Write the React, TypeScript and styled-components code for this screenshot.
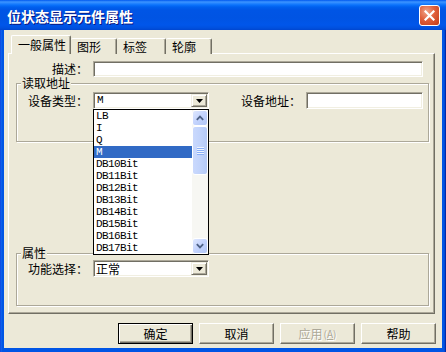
import React from 'react'
import styled, { createGlobalStyle } from 'styled-components'

const GlobalStyle = createGlobalStyle`
	html, body {
		margin: 0;
		padding: 0;
		background: #fff;
	}
	body {
		font-family: "Noto Sans CJK SC", "Noto Sans", sans-serif;
		font-size: 12px;
		color: #000;
	}
`

const face = '#ECE9D8'
const mono = '"Liberation Mono", "DejaVu Sans Mono", monospace'

const items = ['LB', 'I', 'Q', 'M', 'DB10Bit', 'DB11Bit', 'DB12Bit', 'DB13Bit', 'DB14Bit', 'DB15Bit', 'DB16Bit', 'DB17Bit']

const tabs = [
	{ label: '一般属性', width: 60 },
	{ label: '图形', width: 46 },
	{ label: '标签', width: 49 },
	{ label: '轮廓', width: 46 },
]

export default function App() {
	return (
		<>
			<GlobalStyle />
			<Window>
				<TitleBar>
					<Title>位状态显示元件属性</Title>
					<CloseButton>
						<svg width="11" height="11" viewBox="0 0 11 11">
							<path d="M1.5 1.5 L9.5 9.5 M9.5 1.5 L1.5 9.5" stroke="#fff" strokeWidth="2.2" strokeLinecap="square" />
						</svg>
					</CloseButton>
				</TitleBar>
				<Frame>
					<Client>
						<TabRow>
							{tabs.map((t, i) => (
								<Tab key={t.label} $active={i === 0} $width={t.width}>
									{t.label}
								</Tab>
							))}
						</TabRow>
						<Panel>
							<Row>
								<Label $width={72}>描述：</Label>
								<TextBox $width={330} />
							</Row>

							<Group>
								<Legend>读取地址</Legend>
								<GroupBody $top={3} $bottom={32}>
									<Row>
										<Label $width={71}>设备类型：</Label>
										<Combo $width={116}>
											<ComboValue>M</ComboValue>
											<DropButton>
												<svg width="7" height="4" viewBox="0 0 7 4">
													<polygon points="0,0 7,0 3.5,4" fill="#000" />
												</svg>
											</DropButton>
											<DropList>
												<ListItems>
													{items.map((item) => (
														<ListItem key={item} $selected={item === 'M'}>
															{item}
														</ListItem>
													))}
												</ListItems>
												<ScrollBar>
													<ScrollButton>
														<svg width="8" height="6" viewBox="0 0 8 6">
															<path d="M0.8 4.8 L4 1.6 L7.2 4.8" stroke="#4D6185" strokeWidth="1.8" fill="none" />
														</svg>
													</ScrollButton>
													<Thumb>
														<Grip />
													</Thumb>
													<Track />
													<ScrollButton>
														<svg width="8" height="6" viewBox="0 0 8 6">
															<path d="M0.8 1.2 L4 4.4 L7.2 1.2" stroke="#4D6185" strokeWidth="1.8" fill="none" />
														</svg>
													</ScrollButton>
												</ScrollBar>
											</DropList>
										</Combo>
										<Label $width={60} $gap={32}>设备地址：</Label>
										<TextBox $width={117} $height={17} />
									</Row>
								</GroupBody>
							</Group>

							<Group $push>
								<Legend>属性</Legend>
								<GroupBody $top={1} $bottom={28}>
									<Row>
										<Label $width={71}>功能选择：</Label>
										<Combo $width={116}>
											<ComboValue $cjk>正常</ComboValue>
											<DropButton>
												<svg width="7" height="4" viewBox="0 0 7 4">
													<polygon points="0,0 7,0 3.5,4" fill="#000" />
												</svg>
											</DropButton>
										</Combo>
									</Row>
								</GroupBody>
							</Group>
						</Panel>

						<ButtonRow>
							<Button $default>确定</Button>
							<Button>取消</Button>
							<Button $disabled>
								应用<Small>(<u>A</u>)</Small>
							</Button>
							<Button>帮助</Button>
						</ButtonRow>
					</Client>
				</Frame>
			</Window>
		</>
	)
}

const Window = styled.div`
	width: 446px;
	height: 352px;
	display: flex;
	flex-direction: column;
	background: #0055e5;
`

const TitleBar = styled.div`
	height: 30px;
	flex-shrink: 0;
	display: flex;
	align-items: center;
	justify-content: space-between;
	padding: 0 6px 0 7px;
	box-sizing: border-box;
	background: linear-gradient(
		#0058ee 0px,
		#3d95ff 2px,
		#2a88ff 3px,
		#0a72fb 5px,
		#0060ee 7px,
		#0055e5 10px,
		#0054e3 18px,
		#0056ea 25px,
		#0050de 28px,
		#0046cf 30px
	);
`

const Title = styled.div`
	color: #fff;
	font-weight: bold;
	font-size: 14px;
	line-height: 16px;
	text-shadow: 1px 1px 0 #0a1883;
	margin-top: 1px;
`

const CloseButton = styled.div`
	width: 21px;
	height: 21px;
	box-sizing: border-box;
	border: 1px solid #fff;
	border-radius: 3px;
	display: flex;
	align-items: center;
	justify-content: center;
	background: radial-gradient(circle at 35% 30%, #f0a58a 0%, #e0603c 45%, #c23a16 100%);
`

const Frame = styled.div`
	flex: 1;
	display: flex;
	padding: 0 4px 4px;
	background: linear-gradient(90deg, #0831d9 0, #166aee 1px, #0055e5 2px, #0055e5 calc(100% - 2px), #0041c8 calc(100% - 1px), #00138c 100%);
`

const Client = styled.div`
	flex: 1;
	display: flex;
	flex-direction: column;
	background: ${face};
	padding: 5px 6px 4px 4px;
`

const TabRow = styled.div`
	height: 19px;
	display: flex;
	align-items: flex-end;
	padding-left: 3px;
	position: relative;
	z-index: 1;
`

const Tab = styled.div<{ $active?: boolean; $width: number }>`
	width: ${(p) => p.$width}px;
	height: ${(p) => (p.$active ? 19 : 16)}px;
	box-sizing: border-box;
	padding: ${(p) => (p.$active ? 2 : 1)}px 0 0 6px;
	line-height: 13px;
	background: ${face};
	border-top: 1px solid #fff;
	border-left: ${(p) => (p.$active ? '1px solid #fff' : 'none')};
	border-right: 1px solid #716f64;
	box-shadow: inset -1px 0 0 #aca899;
	border-radius: 2px 2px 0 0;
	white-space: nowrap;
`

const Panel = styled.div`
	height: 261px;
	box-sizing: border-box;
	margin: -1px 1px 0 0;
	border: 1px solid;
	border-color: #fff #716f64 #716f64 #fff;
	box-shadow: inset -1px -1px 0 #aca899;
	padding: 7px 5px 7px 7px;
	display: flex;
	flex-direction: column;
`

const Row = styled.div`
	display: flex;
	align-items: center;
`

const Label = styled.div<{ $width: number; $gap?: number }>`
	width: ${(p) => p.$width}px;
	margin-left: ${(p) => p.$gap ?? 0}px;
	margin-right: 5px;
	flex-shrink: 0;
	text-align: right;
	white-space: nowrap;
	line-height: 14px;
`

const sunken = `
	box-sizing: border-box;
	background: #fff;
	border: 1px solid;
	border-color: #aca899 #fff #fff #aca899;
	box-shadow: inset 1px 1px 0 #716f64, inset -1px -1px 0 #f1efe2;
`

const TextBox = styled.div<{ $width: number; $height?: number }>`
	${sunken}
	width: ${(p) => p.$width}px;
	height: ${(p) => p.$height ?? 16}px;
`

const Group = styled.fieldset<{ $push?: boolean }>`
	margin: ${(p) => (p.$push ? 'auto' : '0')} 0 0;
	padding: 0;
	min-width: 0;
	border: 1px solid #aca899;
	box-shadow: inset 1px 1px 0 #fff, 1px 1px 0 #fff;
`

const Legend = styled.legend`
	font-size: 12px;
	line-height: 12px;
	padding: 0 1px;
	margin-left: 4px;
	background: ${face};
`

const GroupBody = styled.div<{ $top: number; $bottom: number }>`
	padding: ${(p) => p.$top}px 0 ${(p) => p.$bottom}px 0;
`

const Combo = styled.div<{ $width: number }>`
	${sunken}
	position: relative;
	width: ${(p) => p.$width}px;
	height: 17px;
	display: flex;
	align-items: center;
	padding: 1px;
`

const ComboValue = styled.div<{ $cjk?: boolean }>`
	flex: 1;
	padding-left: ${(p) => (p.$cjk ? 1 : 2)}px;
	font-family: ${(p) => (p.$cjk ? '"Noto Sans CJK SC", sans-serif' : mono)};
	font-size: ${(p) => (p.$cjk ? 12 : 11)}px;
	line-height: 13px;
`

const DropButton = styled.div`
	width: 16px;
	height: 13px;
	box-sizing: border-box;
	background: ${face};
	border: 1px solid;
	border-color: #f1efe2 #716f64 #716f64 #f1efe2;
	box-shadow: inset 1px 1px 0 #fff, inset -1px -1px 0 #aca899;
	display: flex;
	align-items: center;
	justify-content: center;
`

const DropList = styled.div`
	position: absolute;
	top: calc(100% + 1px);
	left: -1px;
	width: 116px;
	box-sizing: border-box;
	border: 1px solid #000;
	background: #fff;
	display: flex;
	z-index: 5;
`

const ListItems = styled.div`
	flex: 1;
	display: flex;
	flex-direction: column;
`

const ListItem = styled.div<{ $selected?: boolean }>`
	height: 12px;
	line-height: 12px;
	padding-left: 2px;
	font-family: ${mono};
	font-size: 11px;
	letter-spacing: -0.6px;
	background: ${(p) => (p.$selected ? '#316ac5' : 'transparent')};
	color: ${(p) => (p.$selected ? '#fff' : '#000')};
`

const ScrollBar = styled.div`
	width: 16px;
	display: flex;
	flex-direction: column;
	background: #f7f7f3;
`

const ScrollButton = styled.div`
	height: 16px;
	box-sizing: border-box;
	border: 1px solid #fff;
	border-radius: 3px;
	background: linear-gradient(135deg, #dfe8fe 0%, #c3d3fd 50%, #b1c6f6 100%);
	display: flex;
	align-items: center;
	justify-content: center;
`

const Thumb = styled.div`
	height: 49px;
	box-sizing: border-box;
	border: 1px solid #fff;
	border-radius: 3px;
	background: linear-gradient(90deg, #cad9fd 0%, #c1d3fb 50%, #b5caf7 100%);
	display: flex;
	align-items: center;
	justify-content: center;
`

const Grip = styled.div`
	width: 7px;
	height: 8px;
	background: repeating-linear-gradient(#eef4fe 0, #eef4fe 1px, #8cb0f8 1px, #8cb0f8 2px);
`

const Track = styled.div`
	flex: 1;
`

const ButtonRow = styled.div`
	display: flex;
	justify-content: flex-end;
	gap: 6px;
	margin-top: 9px;
`

const Button = styled.div<{ $default?: boolean; $disabled?: boolean }>`
	width: 75px;
	height: 21px;
	box-sizing: border-box;
	display: flex;
	align-items: center;
	justify-content: center;
	background: ${face};
	border: 1px solid;
	border-color: ${(p) => (p.$default ? '#000' : '#fff #716f64 #716f64 #fff')};
	box-shadow: ${(p) =>
		p.$default
			? 'inset 1px 1px 0 #fff, inset -1px -1px 0 #716f64, inset -2px -2px 0 #aca899'
			: 'inset -1px -1px 0 #aca899'};
	color: ${(p) => (p.$disabled ? '#aca899' : '#000')};
	text-shadow: ${(p) => (p.$disabled ? '1px 1px 0 #fff' : 'none')};
	line-height: 14px;
`

const Small = styled.span`
	font-size: 10px;
	margin-left: 1px;
`
